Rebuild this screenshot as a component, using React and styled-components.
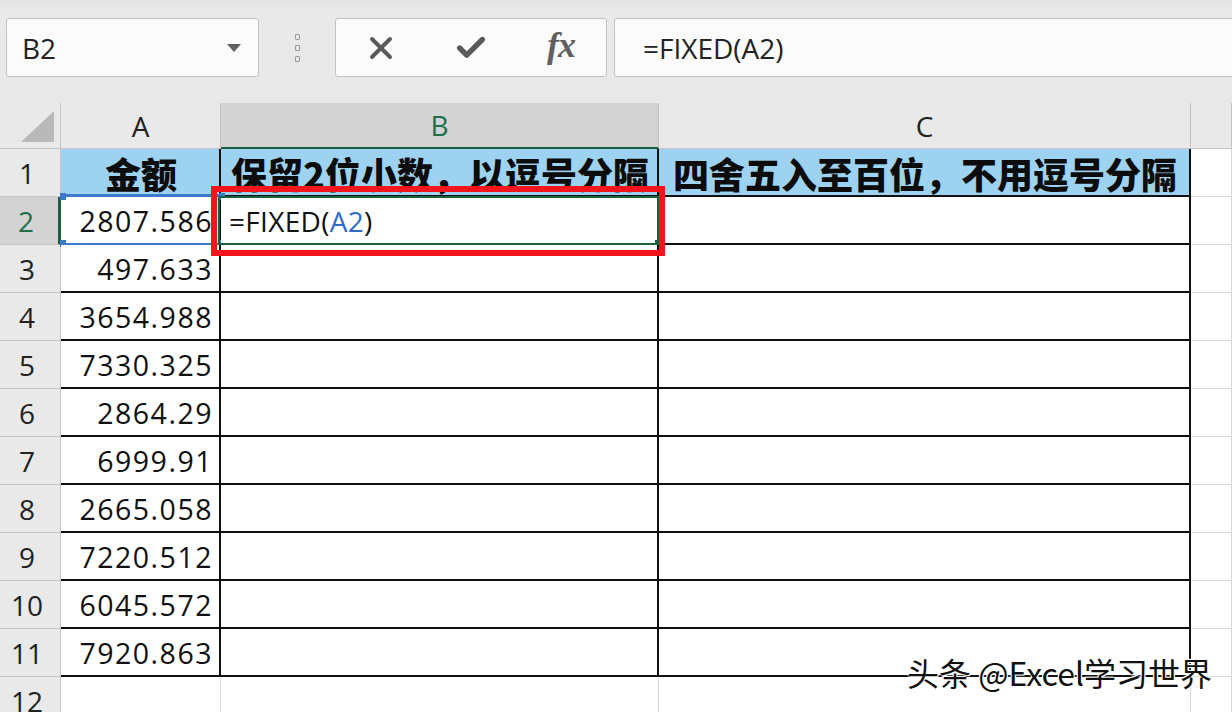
import styled, { createGlobalStyle } from 'styled-components'
import { X, Check } from 'lucide-react'

const GlobalStyle = createGlobalStyle`
    html, body {
        margin: 0;
        padding: 0;
        background: #ffffff;
        overflow: hidden;
    }
    body {
        font-family: "Open Sans", "Noto Sans CJK SC", sans-serif;
    }
`

const Page = styled.div`
    position: relative;
    width: 1232px;
    height: 712px;
    overflow: hidden;
`
const Toolbar = styled.div`
    display: flex;
    align-items: flex-start;
    box-sizing: border-box;
    height: 103px;
    padding-top: 18px;
    background: linear-gradient(#e2e2e2 0, #e9e9e9 8px, #e8e8e8 100%);
`
const Box = styled.div`
    box-sizing: border-box;
    height: 59px;
    background: #fbfbfb;
    border: 1px solid #c2c2c2;
    border-radius: 3px;
    display: flex;
    align-items: center;
`
const NameBox = styled(Box)`
    width: 253px;
    margin-left: 6px;
    padding: 0 17px 0 15px;
    justify-content: space-between;
    font-size: 28px;
    color: #222;
`
const DropArrow = styled.span`
    width: 0;
    height: 0;
    border-left: 7px solid transparent;
    border-right: 7px solid transparent;
    border-top: 8px solid #5f5f5f;
`
const Grip = styled.div`
    width: 76px;
    height: 59px;
    display: flex;
    flex-direction: column;
    align-items: center;
    justify-content: center;
    gap: 5px;
`
const GripDot = styled.span`
    width: 3px;
    height: 4px;
    border: 1px solid #9a9a9a;
    border-radius: 1px;
`
const FuncBox = styled(Box)`
    width: 272px;
    display: grid;
    grid-template-columns: repeat(3, 90px);
    justify-items: center;
    color: #5a5a5a;
`
const FxLabel = styled.span`
    font-family: "Liberation Serif", serif;
    font-style: italic;
    font-weight: bold;
    font-size: 36px;
    color: #606060;
    letter-spacing: -1px;
    margin-top: -6px;
`
const FormulaBox = styled(Box)`
    flex: 1;
    margin-left: 7px;
    margin-right: -6px;
    padding-left: 28px;
    font-size: 28px;
    color: #222;
`

const Sheet = styled.div`
    display: grid;
    grid-template-columns: 61px 160px 438px 532px 1fr;
    grid-template-rows: 46px repeat(12, 48px);
`
const Corner = styled.div`
    position: relative;
    background: #e9e9e9;
    border-right: 1px solid #c6c6c6;
    border-bottom: 1px solid #c6c6c6;
    &::after {
        content: '';
        position: absolute;
        right: 6px;
        bottom: 6px;
        width: 0;
        height: 0;
        border-left: 33px solid transparent;
        border-bottom: 31px solid #b9b9b9;
    }
`
const ColHeader = styled.div`
    box-sizing: border-box;
    display: flex;
    align-items: center;
    justify-content: center;
    font-size: 28px;
    background: ${p => (p.$active ? '#d3d3d3' : '#e9e9e9')};
    color: ${p => (p.$active ? '#1e6e48' : '#222')};
    border-right: 1px solid #c2c2c2;
    border-bottom: ${p => (p.$active ? '2px solid #1d5e3f' : '1px solid #c6c6c6')};
`
const RowHeader = styled.div`
    box-sizing: border-box;
    display: flex;
    align-items: center;
    justify-content: center;
    padding-right: 6px;
    font-size: 28px;
    background: ${p => (p.$active ? '#d3d3d3' : '#e9e9e9')};
    color: ${p => (p.$active ? '#1e6e48' : '#222')};
    border-bottom: 1px solid #c6c6c6;
    border-right: ${p => (p.$active ? '3px solid #1d5e3f' : '1px solid #c6c6c6')};
`
const Cell = styled.div`
    position: relative;
    box-sizing: border-box;
    display: flex;
    align-items: center;
    justify-content: ${p => (p.$align === 'right' ? 'flex-end' : p.$align === 'center' ? 'center' : 'flex-start')};
    padding: 2px 6px 0 8px;
    white-space: nowrap;
    background: ${p => (p.$head ? '#9dd3f1' : '#ffffff')};
    border-right: ${p => (p.$data ? '2px solid #111' : '1px solid #d9d9d9')};
    border-bottom: ${p => (p.$data ? '2px solid #111' : '1px solid #d9d9d9')};
`
const NumText = styled.span`
    font-size: 28.5px;
    letter-spacing: 1.5px;
    color: #111;
`
const HeadText = styled.span`
    font-family: "Noto Sans CJK SC", sans-serif;
    font-weight: 900;
    font-size: 36px;
    line-height: 1;
    color: #0c0c0c;
`
const FormulaText = styled.span`
    font-size: 28px;
    color: #111;
    letter-spacing: 0.3px;
`
const RefText = styled.span`
    color: #2f6cc4;
`
const RefFrame = styled.span`
    position: absolute;
    left: 0;
    right: -2px;
    top: -3px;
    bottom: -3px;
    border-top: 3px solid #3c78cc;
    border-bottom: 3px solid #3c78cc;
    pointer-events: none;
`
const Handle = styled.span`
    position: absolute;
    width: 6px;
    height: 7px;
    background: ${p => p.$color};
    ${p => (p.$top ? 'top: -4px;' : 'bottom: -4px;')}
    ${p => (p.$left ? 'left: -1px;' : 'right: -4px;')}
`
const ActiveFrame = styled.span`
    position: absolute;
    left: -3px;
    right: -2px;
    top: -1px;
    bottom: -2px;
    border: 2px solid #1d5e3f;
    pointer-events: none;
`
const Callout = styled.span`
    position: absolute;
    left: -10px;
    right: -8px;
    top: -11px;
    bottom: -13px;
    border: 6px solid #f2151b;
    z-index: 5;
    pointer-events: none;
`
const Watermark = styled.div`
    position: absolute;
    right: 20px;
    bottom: 17px;
    font-family: "Noto Sans CJK SC", sans-serif;
    font-size: 32px;
    color: #111;
    text-shadow: 0 0 2px #fff, 0 0 2px #fff, 1px 1px 0 #fff, -1px -1px 0 #fff;
    z-index: 6;
`

const amounts = ['2807.586', '497.633', '3654.988', '7330.325', '2864.29', '6999.91', '2665.058', '7220.512', '6045.572', '7920.863']

export default function App() {
    const rows = []
    for (let r = 1; r <= 12; r++) {
        const data = r <= 11
        rows.push(<RowHeader key={'h' + r} $active={r === 2}>{r}</RowHeader>)
        if (r === 1) {
            rows.push(<Cell key="a1" $data $head $align="center"><HeadText>金额</HeadText></Cell>)
            rows.push(<Cell key="b1" $data $head $align="center"><HeadText>保留2位小数，以逗号分隔</HeadText></Cell>)
            rows.push(<Cell key="c1" $data $head $align="center"><HeadText>四舍五入至百位，不用逗号分隔</HeadText></Cell>)
        } else if (r === 2) {
            rows.push(
                <Cell key="a2" $data $align="right">
                    <NumText>{amounts[0]}</NumText>
                    <RefFrame>
                        <Handle $color="#3c78cc" $top $left />
                        <Handle $color="#3c78cc" $left />
                        <Handle $color="#3c78cc" $top />
                        <Handle $color="#3c78cc" />
                    </RefFrame>
                </Cell>
            )
            rows.push(
                <Cell key="b2" $data>
                    <FormulaText>=FIXED(<RefText>A2</RefText>)</FormulaText>
                    <ActiveFrame>
                        <Handle $color="#1d5e3f" />
                    </ActiveFrame>
                    <Callout />
                </Cell>
            )
            rows.push(<Cell key="c2" $data />)
        } else {
            rows.push(
                <Cell key={'a' + r} $data={data} $align="right">
                    {data && <NumText>{amounts[r - 2]}</NumText>}
                </Cell>
            )
            rows.push(<Cell key={'b' + r} $data={data} />)
            rows.push(<Cell key={'c' + r} $data={data} />)
        }
        rows.push(<Cell key={'d' + r} />)
    }

    return (
        <Page>
            <GlobalStyle />
            <Toolbar>
                <NameBox>
                    <span>B2</span>
                    <DropArrow />
                </NameBox>
                <Grip>
                    <GripDot />
                    <GripDot />
                    <GripDot />
                </Grip>
                <FuncBox>
                    <X size={36} strokeWidth={2.6} />
                    <Check size={34} strokeWidth={3.8} />
                    <FxLabel>fx</FxLabel>
                </FuncBox>
                <FormulaBox>=FIXED(A2)</FormulaBox>
            </Toolbar>
            <Sheet>
                <Corner />
                <ColHeader>A</ColHeader>
                <ColHeader $active>B</ColHeader>
                <ColHeader>C</ColHeader>
                <ColHeader />
                {rows}
            </Sheet>
            <Watermark>头条 @Excel学习世界</Watermark>
        </Page>
    )
}
